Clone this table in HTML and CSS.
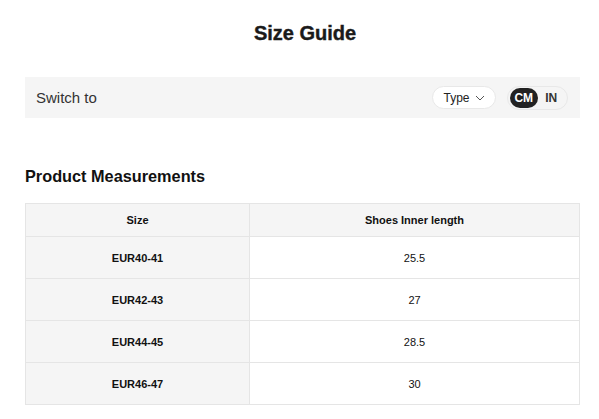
FILE: index.html
```html
<!DOCTYPE html>
<html>
<head>
<meta charset="utf-8">
<link rel="stylesheet" href="styles.css">
</head>
<body>
<div class="page">
  <h1 class="title">Size Guide</h1>
  <div class="switchbar">
    <span class="switch-label">Switch to</span>
    <div class="controls">
      <div class="type-pill">Type
        <svg class="chev" width="10" height="6" viewBox="0 0 10 6"><path d="M1 1l4 4 4-4" fill="none" stroke="#555" stroke-width="1"/></svg>
      </div>
      <div class="unit-toggle">
        <span class="unit active">CM</span>
        <span class="unit">IN</span>
      </div>
    </div>
  </div>
  <h2 class="section">Product Measurements</h2>
  <table class="sizes">
    <thead>
      <tr><th class="c1">Size</th><th>Shoes Inner length</th></tr>
    </thead>
    <tbody>
      <tr><td class="c1">EUR40-41</td><td>25.5</td></tr>
      <tr><td class="c1">EUR42-43</td><td>27</td></tr>
      <tr><td class="c1">EUR44-45</td><td>28.5</td></tr>
      <tr><td class="c1">EUR46-47</td><td>30</td></tr>
    </tbody>
  </table>
</div>
</body>
</html>
```
FILE: styles.css
```css
html, body { margin: 0; padding: 0; background: #fff; }
body { font-family: "Liberation Sans", Arial, sans-serif; color: #222; }
.page { padding: 0 19px 0 25px; }
.title {
  margin: 21px 0 32px;
  padding-left: 5px;
  font-size: 20px;
  line-height: 24px;
  font-weight: 700;
  text-align: center;
  color: #1a1a1a;
  -webkit-text-stroke: 0.4px #1a1a1a;
}
.switchbar {
  height: 41px;
  background: #f5f5f5;
  display: flex;
  align-items: center;
  justify-content: space-between;
  padding: 0 12px 0 11px;
}
.switch-label { font-size: 15px; color: #333; }
.controls { display: flex; align-items: center; gap: 11px; }
.type-pill {
  height: 23px;
  box-sizing: border-box;
  width: 64px;
  border: 1px solid #e8e8e8;
  border-radius: 12px;
  background: #fff;
  display: flex;
  align-items: center;
  justify-content: center;
  gap: 5px;
  font-size: 12px;
  color: #222;
}
.chev { margin-top: 1px; }
.unit-toggle {
  height: 24px;
  box-sizing: border-box;
  width: 61px;
  border: 1px solid #e8e8e8;
  border-radius: 12px;
  padding: 1px 2px;
  display: flex;
  align-items: center;
}
.unit {
  height: 20px;
  width: 29px;
  border-radius: 10px;
  display: flex;
  align-items: center;
  justify-content: center;
  font-size: 12px;
  font-weight: 700;
  color: #333;
}
.unit.active { background: #222; color: #fff; }
.section {
  margin: 48px 0 17px;
  font-size: 16.3px;
  line-height: 20px;
  font-weight: 700;
  color: #111;
}
.sizes {
  width: 555px;
  border-collapse: collapse;
  font-size: 11px;
  color: #111;
}
.sizes th, .sizes td {
  border: 1px solid #e5e5e5;
  text-align: center;
  padding: 0;
}
.sizes th { background: #f5f5f5; font-weight: 700; height: 32px; }
.sizes td { height: 41px; }
.sizes .c1 { width: 223px; background: #f5f5f5; font-weight: 700; }
```
